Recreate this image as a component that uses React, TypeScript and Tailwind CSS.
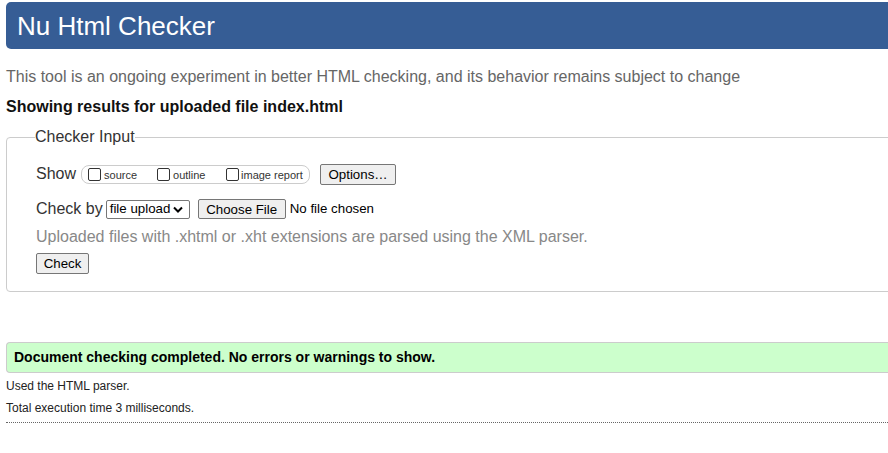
import React from 'react';

export default function App() {
  return (
    <div className="w-[888px] h-[453px] overflow-hidden bg-white font-['Liberation_Sans',Arial,sans-serif] text-[#222]">
      <div className="w-[940px] pl-[6px] pt-[2px]">
        <header className="h-[47px] bg-[#365d95] rounded-l-[5px] flex items-center pl-[11px]">
          <h1 className="text-[26px] text-white leading-none">Nu Html Checker</h1>
        </header>

        <p className="mt-[18px] text-[16px] text-[#666] leading-[20px]">
          This tool is an ongoing experiment in better HTML checking, and its behavior remains subject to change
        </p>
        <p className="mt-[10px] text-[16px] font-bold text-[#111] leading-[20px]">
          Showing results for uploaded file index.html
        </p>

        <fieldset className="mt-[10px] border border-[#ccc] rounded-l-[4px] pl-[29px] pb-[16px] pt-[16px]">
          <legend className="ml-[-1px] px-0 text-[16px] text-[#333] leading-[20px]">
            Checker Input
          </legend>

          <div className="flex items-center h-[22px]">
            <span className="text-[16px] text-[#333] mr-[5px]">Show</span>
            <div className="flex items-center h-[19px] w-[229px] border border-[#ccc] rounded-[8px] text-[11px] text-[#333] pl-[6px]">
              <label className="flex items-center w-[69px]">
                <Box />
                <span className="ml-[3px] mt-[2px]">source</span>
              </label>
              <label className="flex items-center w-[69px]">
                <Box />
                <span className="ml-[3px] mt-[2px]">outline</span>
              </label>
              <label className="flex items-center">
                <Box />
                <span className="ml-[2px] mt-[2px]">image report</span>
              </label>
            </div>
            <button className="ml-[10px] h-[21px] w-[76px] border border-[#767676] rounded-[2px] bg-[#efefef] text-[13.3px] text-black">
              Options…
            </button>
          </div>

          <div className="flex items-center h-[22px] mt-[13px]">
            <span className="text-[16px] text-[#333] mr-[3px]">Check by</span>
            <div className="h-[19px] w-[84px] border border-[#767676] rounded-[2px] bg-white flex items-center pl-[3px] text-[13.3px] text-black">
              <span>file upload</span>
              <svg className="ml-[3px]" width="10" height="7" viewBox="0 0 10 7">
                <path d="M1 1.5 L5 5.5 L9 1.5" fill="none" stroke="#000" strokeWidth="2" />
              </svg>
            </div>
            <button className="ml-[8px] h-[20px] w-[88px] border border-[#767676] rounded-[2px] bg-[#efefef] text-[13.3px] text-black">
              Choose File
            </button>
            <span className="ml-[4px] text-[13.3px] text-black">No file chosen</span>
          </div>

          <p className="mt-[7px] text-[16px] text-[#888] leading-[20px]">
            Uploaded files with .xhtml or .xht extensions are parsed using the XML parser.
          </p>

          <button className="mt-[6px] h-[21px] w-[53px] border border-[#767676] rounded-[2px] bg-[#efefef] text-[13.3px] text-black">
            Check
          </button>
        </fieldset>

        <div className="mt-[50px] h-[31px] bg-[#ccffcc] border border-[#ccc] border-r-0 rounded-l-[4px] flex items-center pl-[7px]">
          <span className="text-[14px] font-bold text-black">Document checking completed. No errors or warnings to show.</span>
        </div>

        <p className="mt-[5px] text-[12px] text-[#222] leading-[16px]">Used the HTML parser.</p>
        <p className="mt-[6px] text-[12px] text-[#222] leading-[16px]">Total execution time 3 milliseconds.</p>

        <div className="mt-[6px] border-t border-dotted border-[#666]" />
      </div>
    </div>
  );
}

function Box() {
  return <span className="inline-block w-[13px] h-[13px] border border-[#333] rounded-[2px] bg-white" />;
}
